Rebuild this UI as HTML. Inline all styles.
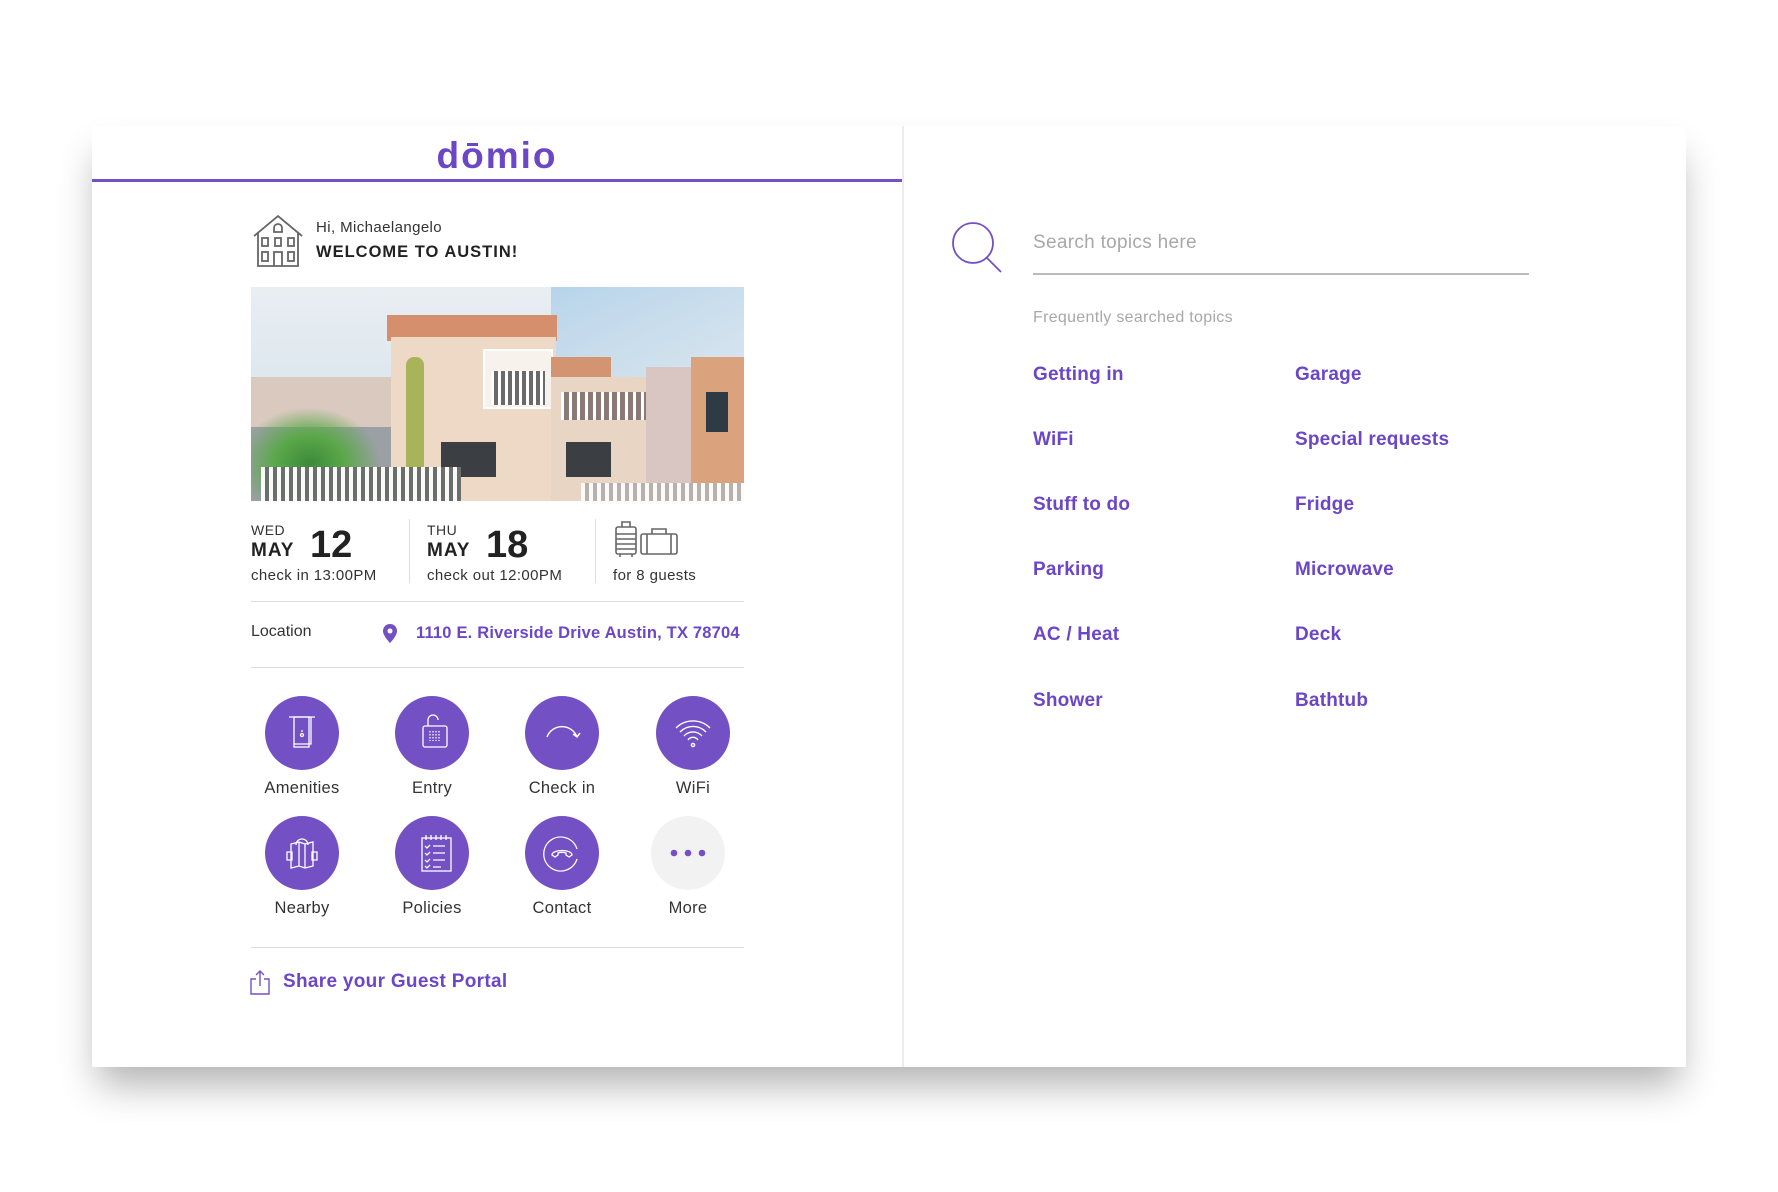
<!DOCTYPE html>
<html><head><meta charset="utf-8"><style>
*{margin:0;padding:0;box-sizing:border-box}
body{width:1778px;height:1192px;background:#fff;position:relative;overflow:hidden;font-family:"Liberation Sans",sans-serif;color:#222}
.card{position:absolute;left:92px;top:126px;width:1594px;height:941px;background:#fff;box-shadow:0 24px 36px -6px rgba(0,0,0,.3)}
.abs{position:absolute}
.p{color:#6b46c6}
.circ{position:absolute;width:74px;height:74px;border-radius:50%;background:#7350c4}
.lbl{position:absolute;width:140px;text-align:center;font-size:16.5px;color:#333;letter-spacing:.3px}
.topic{position:absolute;font-size:19px;font-weight:bold;color:#6b46c6;letter-spacing:.2px}
</style></head><body>
<div class="card"></div>
<div class="abs" style="left:902px;top:126px;width:2px;height:941px;background:#ececec"></div>
<div class="abs" style="left:92px;top:179px;width:810px;height:3px;background:#7350c4"></div>
<div class="abs p" style="left:397px;top:135px;width:200px;text-align:center;font-size:37px;font-weight:bold;letter-spacing:2px">dōmio</div>

<svg class="abs" style="left:252px;top:214px" width="52" height="54" viewBox="0 0 52 54" fill="none" stroke="#666" stroke-width="1.8"><path d="M2 22 L26 2 L50 22 M6 19 V52 H46 V19"/><path d="M22 14a4 4 0 0 1 8 0v4h-8z"/><rect x="10" y="24" width="6" height="8"/><rect x="23" y="24" width="6" height="8"/><rect x="36" y="24" width="6" height="8"/><rect x="10" y="38" width="6" height="9"/><rect x="36" y="38" width="6" height="9"/><path d="M22 52V38h8v14"/></svg>
<div class="abs" style="left:316px;top:219px;font-size:15px;color:#333;letter-spacing:.4px">Hi, Michaelangelo</div>
<div class="abs" style="left:316px;top:243px;font-size:16.5px;font-weight:bold;color:#222;letter-spacing:1px">WELCOME TO AUSTIN!</div>

<div class="abs" style="left:251px;top:287px;width:493px;height:214px;overflow:hidden;background:linear-gradient(180deg,#e9eef2 0%,#dfe8ef 40%,#cfdbe5 100%)">
 <div class="abs" style="left:300px;top:0;width:193px;height:120px;background:linear-gradient(160deg,rgba(170,205,232,.8),rgba(220,232,240,0))"></div>
 <div class="abs" style="left:0;top:90px;width:140px;height:124px;background:#d9c9bf"></div>
 <div class="abs" style="left:0;top:140px;width:150px;height:74px;background:#9aa0a3"></div>
 <div class="abs" style="left:136px;top:28px;width:170px;height:26px;background:#d58f6c"></div>
 <div class="abs" style="left:140px;top:50px;width:165px;height:164px;background:#eed9c6"></div>
 <div class="abs" style="left:232px;top:62px;width:70px;height:60px;background:#f7f2ec;border:2px solid #fff"></div>
 <div class="abs" style="left:240px;top:84px;width:54px;height:34px;background:repeating-linear-gradient(90deg,#fff 0 3px,#6a6a6a 3px 7px)"></div>
 <div class="abs" style="left:300px;top:70px;width:60px;height:24px;background:#d39472"></div>
 <div class="abs" style="left:300px;top:90px;width:105px;height:124px;background:#e9d5c3"></div>
 <div class="abs" style="left:310px;top:105px;width:90px;height:28px;background:repeating-linear-gradient(90deg,#fff 0 3px,#8a7a75 3px 8px)"></div>
 <div class="abs" style="left:190px;top:155px;width:55px;height:35px;background:#3b3f44"></div>
 <div class="abs" style="left:315px;top:155px;width:45px;height:35px;background:#3b3f44"></div>
 <div class="abs" style="left:155px;top:70px;width:18px;height:144px;background:#a9b35a;border-radius:8px"></div>
 <div class="abs" style="left:395px;top:80px;width:98px;height:134px;background:#d9c6c2"></div>
 <div class="abs" style="left:440px;top:70px;width:53px;height:144px;background:#dba37d"></div>
 <div class="abs" style="left:455px;top:105px;width:22px;height:40px;background:#2e3a44"></div>
 <div class="abs" style="left:0;top:120px;width:130px;height:94px;background:radial-gradient(ellipse at 45% 60%,#3c8a3a 0,#5ba84a 35%,rgba(90,160,70,0) 70%)"></div>
 <div class="abs" style="left:10px;top:180px;width:200px;height:34px;background:repeating-linear-gradient(90deg,#fafafa 0 4px,#6b6f6a 4px 8px)"></div>
 <div class="abs" style="left:330px;top:196px;width:163px;height:18px;background:repeating-linear-gradient(90deg,#fafafa 0 4px,#b8b0aa 4px 8px)"></div>
</div>

<div class="abs" style="left:251px;top:522px;font-size:14px;letter-spacing:.5px;color:#333">WED</div>
<div class="abs" style="left:251px;top:540px;font-size:19px;font-weight:bold;letter-spacing:1px">MAY</div>
<div class="abs" style="left:310px;top:524px;font-size:38px;font-weight:bold">12</div>
<div class="abs" style="left:251px;top:567px;font-size:15px;color:#333;letter-spacing:.4px">check in 13:00PM</div>
<div class="abs" style="left:409px;top:519px;width:1px;height:64px;background:#ddd"></div>
<div class="abs" style="left:427px;top:522px;font-size:14px;letter-spacing:.5px;color:#333">THU</div>
<div class="abs" style="left:427px;top:540px;font-size:19px;font-weight:bold;letter-spacing:1px">MAY</div>
<div class="abs" style="left:486px;top:524px;font-size:38px;font-weight:bold">18</div>
<div class="abs" style="left:427px;top:567px;font-size:15px;color:#333;letter-spacing:.4px">check out 12:00PM</div>
<div class="abs" style="left:595px;top:519px;width:1px;height:64px;background:#ddd"></div>
<svg class="abs" style="left:614px;top:520px" width="66" height="38" viewBox="0 0 66 38" fill="none" stroke="#666" stroke-width="1.6"><rect x="2" y="7" width="20" height="27" rx="2"/><path d="M8 7V2h8v5M2 14h20M2 19h20M2 24h20M2 29h20M6 34v3M18 34v3"/><rect x="27" y="14" width="36" height="20" rx="2"/><path d="M38 14v-5h14v5M33 14v20M57 14v20"/></svg>
<div class="abs" style="left:613px;top:567px;font-size:15px;color:#333;letter-spacing:.4px">for 8 guests</div>

<div class="abs" style="left:251px;top:601px;width:493px;height:1px;background:#ddd"></div>
<div class="abs" style="left:251px;top:623px;font-size:16px;color:#333">Location</div>
<svg class="abs" style="left:383px;top:624px" width="14" height="19" viewBox="0 0 14 19"><path d="M7 0C3 0 0 3 0 7c0 5 7 12 7 12s7-7 7-12c0-4-3-7-7-7z" fill="#7350c4"/><circle cx="7" cy="7" r="2.5" fill="#fff"/></svg>
<div class="abs p" style="left:416px;top:624px;font-size:16.5px;font-weight:bold;letter-spacing:.2px">1110 E. Riverside Drive Austin, TX 78704</div>
<div class="abs" style="left:251px;top:667px;width:493px;height:1px;background:#ddd"></div>

<div class="circ" style="left:265px;top:696px"></div>
<div class="circ" style="left:395px;top:696px"></div>
<div class="circ" style="left:525px;top:696px"></div>
<div class="circ" style="left:656px;top:696px"></div>
<div class="circ" style="left:265px;top:816px"></div>
<div class="circ" style="left:395px;top:816px"></div>
<div class="circ" style="left:525px;top:816px"></div>
<div class="circ" style="left:651px;top:816px;background:#f2f2f2"></div>
<svg class="abs" style="left:265px;top:696px" width="74" height="74" fill="none" stroke="#fff" stroke-width="1.3"><path d="M24 21h26"/><rect x="29" y="21" width="15" height="30"/><path d="M29 48h17v-27"/><circle cx="37" cy="39" r="1.5"/><path d="M36 35h2"/></svg>
<svg class="abs" style="left:395px;top:696px" width="74" height="74" fill="none" stroke="#fff" stroke-width="1.3"><path d="M33 30v-6a5 5 0 0 1 10 0"/><rect x="28" y="30" width="24" height="21" rx="2"/><path d="M35 35v10M38 35v10M41 35v10M44 35v10" stroke-dasharray="1.5 1.5"/></svg>
<svg class="abs" style="left:525px;top:696px" width="74" height="74" fill="none" stroke="#fff" stroke-width="1.5"><path d="M22 41a16 16 0 0 1 30 0M48 38l4 3 3-4"/></svg>
<svg class="abs" style="left:656px;top:696px" width="74" height="74" fill="none" stroke="#fff" stroke-width="1.4"><path d="M20 32a24 24 0 0 1 34 0M24 36a18 18 0 0 1 26 0M28 40a12 12 0 0 1 18 0M32 44a6 6 0 0 1 10 0"/><circle cx="37" cy="49" r="1.6"/></svg>
<svg class="abs" style="left:265px;top:816px" width="74" height="74" fill="none" stroke="#fff" stroke-width="1.3"><path d="M26 28l8 -2 6 2 8-2v24l-8 2-6-2-8 2z M34 26v24 M40 28v24 M31 29a6 6 0 0 1 12 0"/><path d="M22 36h5v8h-5zM47 36h5v8h-5z"/></svg>
<svg class="abs" style="left:395px;top:816px" width="74" height="74" fill="none" stroke="#fff" stroke-width="1.3"><rect x="27" y="22" width="29" height="33"/><path d="M31 19v5M36 19v5M41 19v5M46 19v5M51 19v5M30 30l2 2 3-3M30 37l2 2 3-3M30 44l2 2 3-3M30 50l2 2 3-3M38 30h12M38 37h12M38 44h12M38 51h8"/></svg>
<svg class="abs" style="left:525px;top:816px" width="74" height="74" fill="none" stroke="#fff" stroke-width="1.3"><path d="M52 33a17 17 0 1 0 0 10"/><path d="M27 39c0-6 20-6 20 0l-3 2-3-2v-2c-3-1-5-1-8 0v2l-3 2z"/></svg>
<svg class="abs" style="left:651px;top:816px" width="74" height="74" fill="#7350c4"><circle cx="23" cy="37" r="3.3"/><circle cx="37" cy="37" r="3.3"/><circle cx="51" cy="37" r="3.3"/></svg>
<div class="lbl" style="left:232px;top:779px">Amenities</div>
<div class="lbl" style="left:362px;top:779px">Entry</div>
<div class="lbl" style="left:492px;top:779px">Check in</div>
<div class="lbl" style="left:623px;top:779px">WiFi</div>
<div class="lbl" style="left:232px;top:899px">Nearby</div>
<div class="lbl" style="left:362px;top:899px">Policies</div>
<div class="lbl" style="left:492px;top:899px">Contact</div>
<div class="lbl" style="left:618px;top:899px">More</div>

<div class="abs" style="left:251px;top:947px;width:493px;height:1px;background:#ddd"></div>
<svg class="abs" style="left:249px;top:969px" width="22" height="26" fill="none" stroke="#7350c4" stroke-width="1.4"><path d="M7 10H2v15h18V10h-5M11 17V2M7 6l4-4 4 4"/></svg>
<div class="abs p" style="left:283px;top:971px;font-size:19px;font-weight:bold;letter-spacing:.3px">Share your Guest Portal</div>

<svg class="abs" style="left:948px;top:218px" width="60" height="60" fill="none" stroke="#7350c4" stroke-width="1.8"><circle cx="25" cy="25" r="20"/><path d="M38 39l15 15"/></svg>
<div class="abs" style="left:1033px;top:232px;font-size:19px;color:#a8a8a8;letter-spacing:.3px">Search topics here</div>
<div class="abs" style="left:1033px;top:273px;width:496px;height:2px;background:#bbb"></div>
<div class="abs" style="left:1033px;top:309px;font-size:16px;color:#a8a8a8;letter-spacing:.3px">Frequently searched topics</div>
<div class="topic" style="left:1033px;top:364px">Getting in</div>
<div class="topic" style="left:1295px;top:364px">Garage</div>
<div class="topic" style="left:1033px;top:429px">WiFi</div>
<div class="topic" style="left:1295px;top:429px">Special requests</div>
<div class="topic" style="left:1033px;top:494px">Stuff to do</div>
<div class="topic" style="left:1295px;top:494px">Fridge</div>
<div class="topic" style="left:1033px;top:559px">Parking</div>
<div class="topic" style="left:1295px;top:559px">Microwave</div>
<div class="topic" style="left:1033px;top:624px">AC / Heat</div>
<div class="topic" style="left:1295px;top:624px">Deck</div>
<div class="topic" style="left:1033px;top:690px">Shower</div>
<div class="topic" style="left:1295px;top:690px">Bathtub</div>
</body></html>
